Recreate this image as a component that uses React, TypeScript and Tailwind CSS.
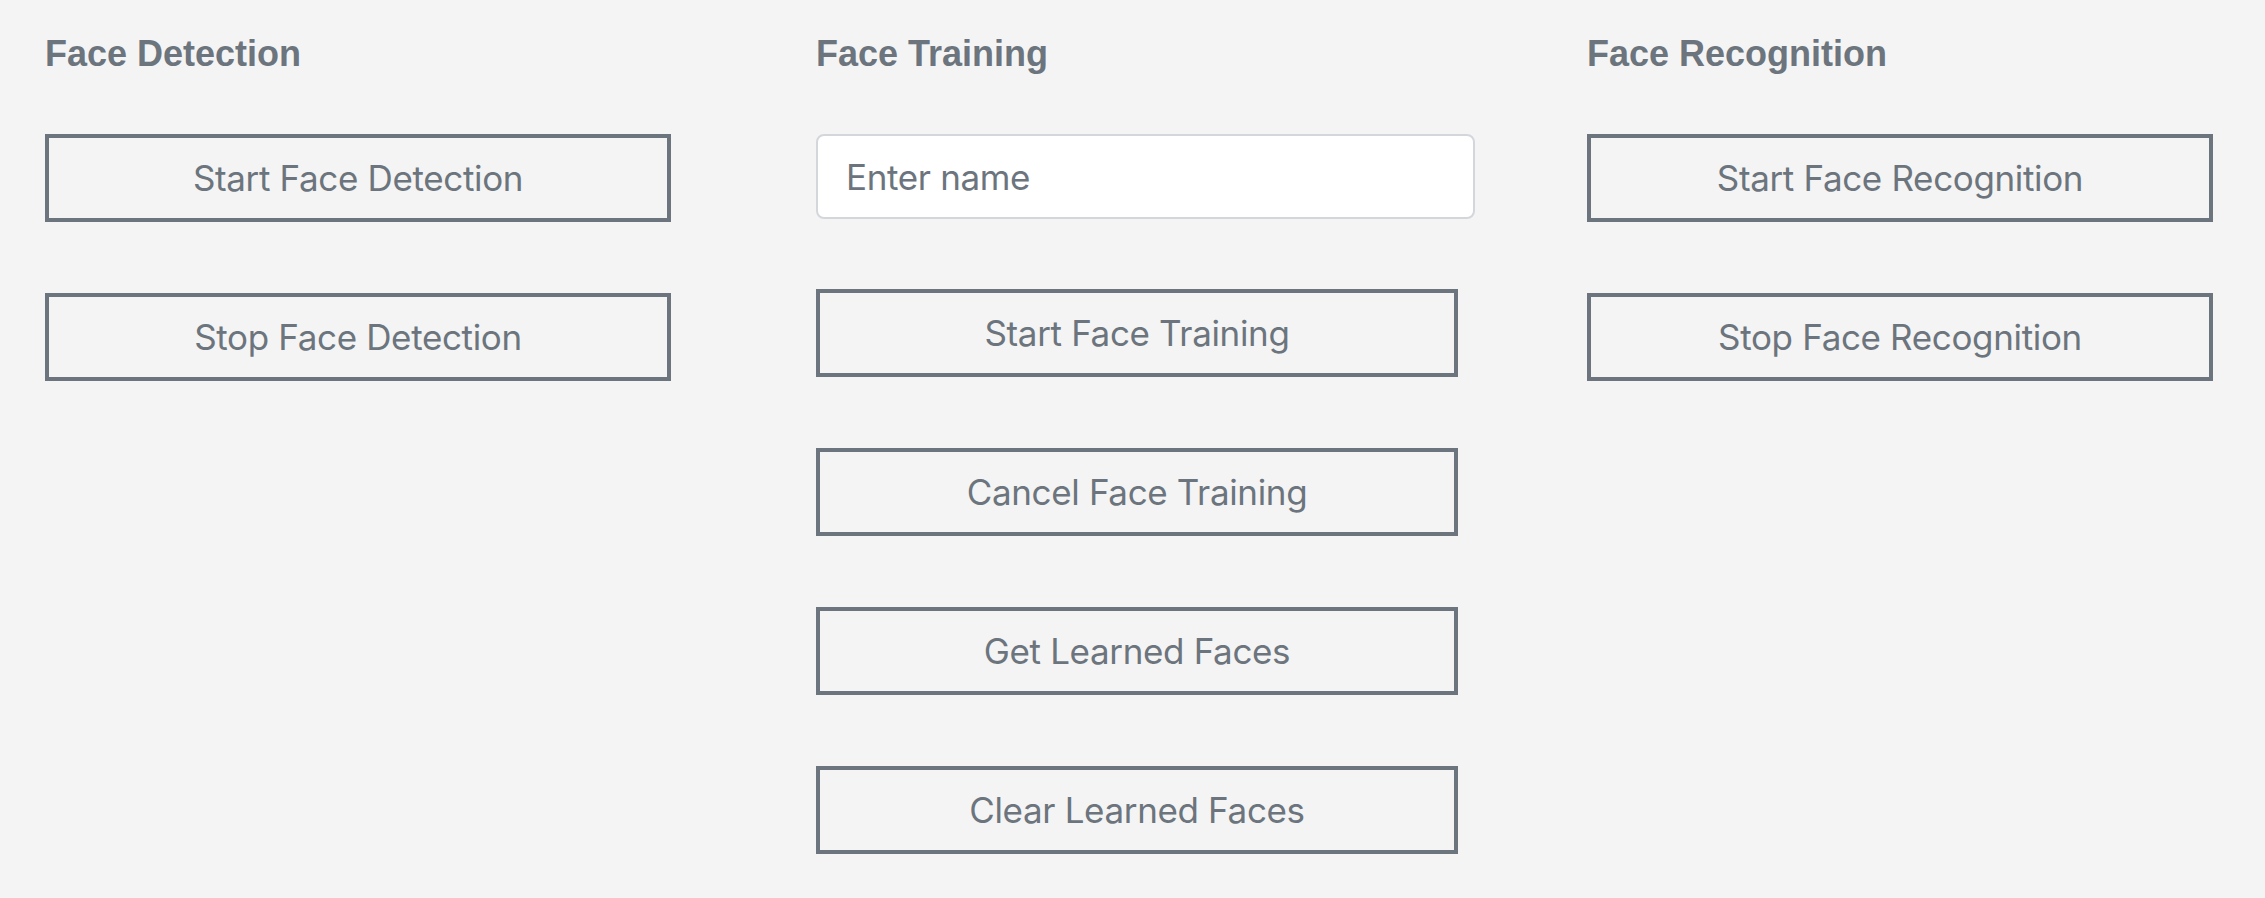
import React from "react";

function Btn({ children, w }: { children: React.ReactNode; w: string }) {
  return (
    <button
      type="button"
      className={`${w} h-[88px] mb-[71px] flex items-center justify-center border-4 border-[#6c757d] bg-transparent text-[35px] tracking-[-0.35px] text-[#6c757d] font-['Inter',sans-serif] font-normal`}
    >
      {children}
    </button>
  );
}

function Heading({ children }: { children: React.ReactNode }) {
  return (
    <h5 className="mt-[36px] mb-[62px] h-[36px] leading-[36px] text-[36px] font-bold text-[#6c757d] font-['Liberation_Sans',Arial,sans-serif]">
      {children}
    </h5>
  );
}

export default function App() {
  return (
    <div className="min-h-[898px] w-full bg-[#f4f4f4] pl-[45px]">
      <div className="grid grid-cols-[771px_771px_1fr]">
        <div className="flex flex-col">
          <Heading>Face Detection</Heading>
          <Btn w="w-[626px]">Start Face Detection</Btn>
          <Btn w="w-[626px]">Stop Face Detection</Btn>
        </div>
        <div className="flex flex-col">
          <Heading>Face Training</Heading>
          <input
            type="text"
            placeholder="Enter name"
            className="w-[659px] h-[85px] mb-[70px] rounded-[8px] border-2 border-[#d3d7dc] bg-white pl-[28px] text-[35px] tracking-[-0.35px] text-[#495057] placeholder:text-[#6c757d] font-['Inter',sans-serif] outline-none"
          />
          <Btn w="w-[642px]">Start Face Training</Btn>
          <Btn w="w-[642px]">Cancel Face Training</Btn>
          <Btn w="w-[642px]">Get Learned Faces</Btn>
          <Btn w="w-[642px]">Clear Learned Faces</Btn>
        </div>
        <div className="flex flex-col">
          <Heading>Face Recognition</Heading>
          <Btn w="w-[626px]">Start Face Recognition</Btn>
          <Btn w="w-[626px]">Stop Face Recognition</Btn>
        </div>
      </div>
    </div>
  );
}
